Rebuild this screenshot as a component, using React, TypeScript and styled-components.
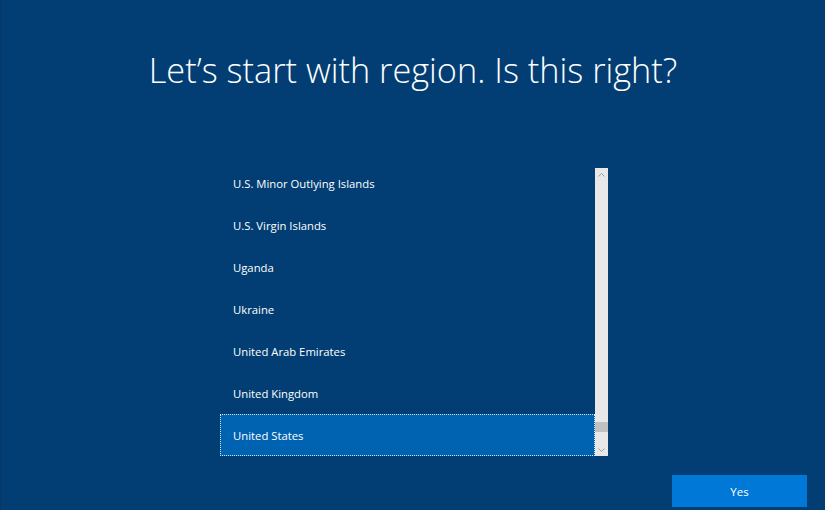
import React from 'react';
import styled, {createGlobalStyle} from 'styled-components';

const GlobalStyle = createGlobalStyle`
    html, body {
        margin: 0;
        padding: 0;
        background: #023e73;
    }
`;

const Page = styled.div`
    width: 825px;
    height: 510px;
    background: #023e73;
    font-family: 'Open Sans', 'Noto Sans', sans-serif;
    color: #ffffff;
    display: flex;
    flex-direction: column;
    overflow: hidden;
    box-sizing: border-box;
    border-left: 1px solid #0a3560;
`;

const Title = styled.h1`
    margin: 46px 0 0;
    font-weight: 300;
    font-size: 34.3px;
    line-height: 48px;
    text-align: center;
`;

const ListWrap = styled.div`
    margin: 74px 0 0 219px;
    width: 388px;
    height: 288px;
    display: flex;
`;

const List = styled.div`
    flex: 1;
    overflow: hidden;
    display: flex;
    flex-direction: column;
`;

const Items = styled.div`
    margin-top: -6px;
    display: flex;
    flex-direction: column;
`;

const Item = styled.div<{$selected?: boolean}>`
    height: 42px;
    flex: 0 0 42px;
    box-sizing: border-box;
    display: flex;
    align-items: center;
    padding-left: 12px;
    font-family: 'Open Sans', 'Noto Sans', sans-serif;
    font-size: 11.3px;
    color: #ffffff;
    background: ${p => (p.$selected ? '#0063b1' : 'transparent')};
    border: 1px dotted ${p => (p.$selected ? '#d8e6f2' : 'transparent')};
`;

const Scrollbar = styled.div`
    width: 13px;
    background: #e8e8e8;
    display: flex;
    flex-direction: column;
    align-items: center;
`;

const Arrow = styled.div`
    height: 13px;
    width: 13px;
    display: flex;
    align-items: center;
    justify-content: center;
`;

const Track = styled.div`
    flex: 1;
    width: 100%;
    display: flex;
    flex-direction: column;
    justify-content: flex-end;
`;

const Thumb = styled.div`
    height: 10px;
    width: 100%;
    background: #c1c1c1;
    margin-bottom: 11px;
`;

const Footer = styled.div`
    display: flex;
    justify-content: flex-end;
    padding: 19px 18px 0 0;
`;

const YesButton = styled.button`
    width: 135px;
    height: 32px;
    border: none;
    background: #0078d7;
    color: #ffffff;
    font-family: 'Open Sans', 'Noto Sans', sans-serif;
    font-size: 11.5px;
    cursor: pointer;
`;

const regions = [
    'U.S. Minor Outlying Islands',
    'U.S. Virgin Islands',
    'Uganda',
    'Ukraine',
    'United Arab Emirates',
    'United Kingdom',
    'United States'
];

const Chevron = ({up}: {up?: boolean}) => (
    <svg width="7" height="4" viewBox="0 0 7 4">
        <path
            d={up ? 'M0.5 3.5 L3.5 0.5 L6.5 3.5' : 'M0.5 0.5 L3.5 3.5 L6.5 0.5'}
            fill="none"
            stroke="#a0a0a0"
            strokeWidth="1"
        />
    </svg>
);

export default function App() {
    return (
        <Page>
            <GlobalStyle />
            <Title>Let’s start with region. Is this right?</Title>
            <ListWrap>
                <List>
                    <Items>
                        {regions.map(r => (
                            <Item key={r} $selected={r === 'United States'}>
                                {r}
                            </Item>
                        ))}
                    </Items>
                </List>
                <Scrollbar>
                    <Arrow>
                        <Chevron up />
                    </Arrow>
                    <Track>
                        <Thumb />
                    </Track>
                    <Arrow>
                        <Chevron />
                    </Arrow>
                </Scrollbar>
            </ListWrap>
            <Footer>
                <YesButton>Yes</YesButton>
            </Footer>
        </Page>
    );
}
